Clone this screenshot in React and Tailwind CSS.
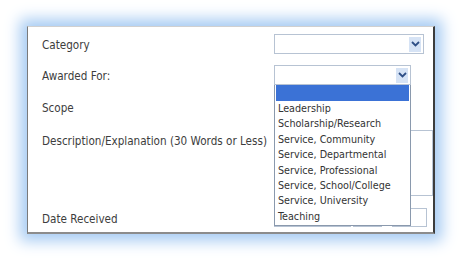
import React from 'react';

const font = "font-['DejaVu_Sans_Condensed','DejaVu_Sans',sans-serif] font-stretch-condensed";

const options = [
    'Leadership',
    'Scholarship/Research',
    'Service, Community',
    'Service, Departmental',
    'Service, Professional',
    'Service, School/College',
    'Service, University',
    'Teaching',
];

const Chevron = () => (
    <svg width="9" height="6" viewBox="0 0 9 6">
        <path d="M1 1 L4.5 4.5 L8 1" fill="none" stroke="#2f4f86" strokeWidth="1.8" />
    </svg>
);

const Select = ({ width }) => (
    <div className={`${width} h-[20px] border border-[#b7c3d3] bg-white flex items-center justify-end pr-[2px]`}>
        <div className="w-[12px] h-[15px] bg-[#d6e3f5] flex items-center justify-center">
            <Chevron />
        </div>
    </div>
);

const Label = ({ children }) => (
    <div className="w-[232px] pt-[4px] flex items-center text-[11.6px] text-[#3d3d3d]">{children}</div>
);

export default function App() {
    return (
        <div className={`w-[463px] h-[263px] bg-white pl-[27px] pt-[26px] ${font}`}>
            <div className="relative w-[408px] h-[208px] bg-white border-l border-t border-l-[#7a7a7a] border-t-[#d0d0d0] border-r-2 border-b-2 border-r-[#3c3c3c] border-b-[#8c8c8c] shadow-[0_0_14px_7px_#a6cbf3] pl-[14px]">
                <div className="flex h-[20px] mt-[7px]">
                    <Label>Category</Label>
                    <Select width="w-[150px]" />
                </div>
                <div className="flex h-[20px] mt-[11px]">
                    <Label>Awarded For:</Label>
                    <Select width="w-[137px]" />
                </div>
                <div className="flex h-[20px] mt-[12px]">
                    <Label>Scope</Label>
                    <div className="w-[137px] h-[20px] border border-[#b7c3d3]" />
                </div>
                <div className="flex h-[66px] mt-[13px]">
                    <div className="w-[232px] pt-[4px] text-[11.6px] text-[#3d3d3d] leading-[14px]">Description/Explanation (30 Words or Less)</div>
                    <div className="w-[159px] h-[66px] border border-[#b7c3d3]" />
                </div>
                <div className="flex h-[19px] mt-[12px]">
                    <Label>Date Received</Label>
                    <div className="flex h-[19px]">
                        <div className="w-[77px] h-[19px] border border-[#b7c3d3]" />
                        <div className="w-[29px] h-[19px] border border-[#b7c3d3] ml-[2px]" />
                        <div className="w-[35px] h-[19px] border border-[#b7c3d3] ml-[10px]" />
                    </div>
                </div>

                {/* open dropdown list */}
                <div className="absolute left-[246px] top-[58px] w-[137px] bg-white border border-[#8a99ad] border-t-0 pb-[1px]">
                    <div className="h-[16px] bg-[#3b72d6] mx-[1px]" />
                    {options.map((o) => (
                        <div key={o} className="h-[15.4px] leading-[15.4px] pl-[3px] text-[10.7px] text-[#333]">{o}</div>
                    ))}
                </div>
            </div>
        </div>
    );
}
